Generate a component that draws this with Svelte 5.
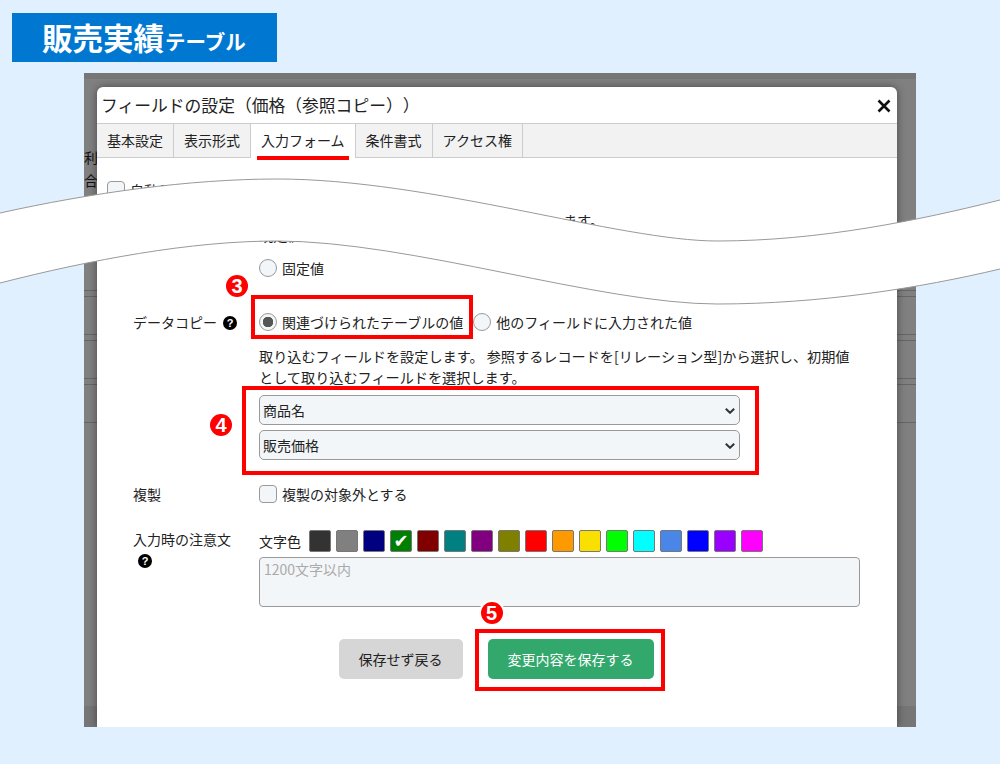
<script lang="ts">
  const tabs = ["基本設定", "表示形式", "入力フォーム", "条件書式", "アクセス権"];
  const activeTab = "入力フォーム";
  const swatches = [
    "#333333", "#808080", "#000080", "#008000", "#800000", "#008080",
    "#800080", "#808000", "#ff0000", "#ff9900", "#f9e000", "#00ff00",
    "#00ffff", "#4a86e8", "#0000ff", "#9900ff", "#ff00ff"
  ];
  const selectedColor = "#008000";
</script>

<div class="page">
  <h1 class="heading">販売実績<small>テーブル</small></h1>

  <div class="stage">
    <div class="behind">
      <p>利用</p>
      <p>合計</p>
      <div class="behind-rows"></div>
    </div>

    <div class="modal">
      <header class="modal-head">
        <h2>フィールドの設定（価格（参照コピー））</h2>
        <svg class="close" width="14" height="14" viewBox="0 0 14 14">
          <path d="M1.5 1.5 L12.5 12.5 M12.5 1.5 L1.5 12.5" stroke="#111" stroke-width="2.6" fill="none" />
        </svg>
      </header>

      <nav class="tabs">
        {#each tabs as tab}
          <div class="tab" class:active={tab === activeTab}>{tab}</div>
        {/each}
      </nav>

      <div class="body">
        <label class="choice">
          <input class="check" type="checkbox" />
          自動入力する
        </label>

        <div class="form">
          <div class="row hidden-row">
            <div></div>
            <div>
              <p class="note first">ます。</p>
              <p class="note second">既定値の設定</p>
              <label class="choice">
                <input class="radio" type="radio" name="init" />
                固定値
              </label>
            </div>
          </div>

          <div class="row copy-row">
            <div class="label">データコピー <span class="help">?</span></div>
            <div>
              <div class="radios">
                <label class="choice marked-radio">
                  <input class="radio" type="radio" name="copy" checked />
                  関連づけられたテーブルの値
                  <span class="frame"></span>
                  <span class="badge">3</span>
                </label>
                <label class="choice">
                  <input class="radio" type="radio" name="copy" />
                  他のフィールドに入力された値
                </label>
              </div>
              <p class="note desc">取り込むフィールドを設定します。 参照するレコードを[リレーション型]から選択し、初期値として取り込むフィールドを選択します。</p>
              <div class="selects">
                <div class="select">
                  <select><option>商品名</option></select>
                  <svg width="10" height="6" viewBox="0 0 10 6">
                    <path d="M0.8 0.8 L5 4.8 L9.2 0.8" stroke="#333" stroke-width="2" fill="none" />
                  </svg>
                </div>
                <div class="select">
                  <select><option>販売価格</option></select>
                  <svg width="10" height="6" viewBox="0 0 10 6">
                    <path d="M0.8 0.8 L5 4.8 L9.2 0.8" stroke="#333" stroke-width="2" fill="none" />
                  </svg>
                </div>
                <span class="frame"></span>
                <span class="badge">4</span>
              </div>
            </div>
          </div>

          <div class="row dup-row">
            <div class="label">複製</div>
            <label class="choice">
              <input class="check" type="checkbox" />
              複製の対象外とする
            </label>
          </div>

          <div class="row hint-row">
            <div class="label">
              入力時の注意文
              <span class="help hint-help">?</span>
            </div>
            <div>
              <div class="colors">
                <span class="colors-label">文字色</span>
                {#each swatches as color}
                  <span class="swatch" style="background: {color}">
                    {#if color === selectedColor}✔{/if}
                  </span>
                {/each}
              </div>
              <textarea placeholder="1200文字以内"></textarea>
            </div>
          </div>
        </div>

        <div class="actions">
          <button class="btn cancel">保存せず戻る</button>
          <div class="save-wrap">
            <button class="btn save">変更内容を保存する</button>
            <span class="frame"></span>
            <span class="badge">5</span>
          </div>
        </div>
      </div>
    </div>
  </div>

  <svg class="tear" width="1000" height="764" viewBox="0 0 1000 764">
    <path
      d="M0 213 C90 193 190 179 277 179 C430 179 620 241 717 241 C820 241 920 220 1000 200 L1000 269 C920 288 820 304 717 304 C600 304 410 241 277 241 C190 241 90 260 0 283 Z"
      fill="#fff"
    />
    <path d="M0 213 C90 193 190 179 277 179 C430 179 620 241 717 241 C820 241 920 220 1000 200" stroke="#999" fill="none" />
    <path d="M0 283 C90 260 190 241 277 241 C410 241 600 304 717 304 C820 304 920 288 1000 269" stroke="#999" fill="none" />
  </svg>
</div>

<style>
  :global(body) {
    margin: 0;
    background: #e0f0fe;
  }

  .page {
    position: relative;
    width: 1000px;
    height: 764px;
    padding-top: 13px;
    box-sizing: border-box;
    overflow: hidden;
    background: #e0f0fe;
    font-family: "Noto Sans CJK JP", "Noto Sans", sans-serif;
    font-size: 14px;
    color: #222;
    text-spacing-trim: space-all;
  }

  .heading {
    display: flex;
    align-items: baseline;
    box-sizing: border-box;
    width: 265px;
    height: 49px;
    margin: 0 0 11px 12px;
    padding-left: 30px;
    background: #0078d2;
    color: #fff;
    font-size: 30.5px;
    font-weight: 700;
    line-height: 48px;
  }

  .heading small {
    margin-left: 1px;
    font-size: 20.5px;
  }

  .stage {
    position: relative;
    display: flex;
    box-sizing: border-box;
    width: 832px;
    height: 654px;
    margin-left: 84px;
    padding: 14px 19px 0 13px;
    overflow: hidden;
    background: #808080;
  }

  .behind {
    position: absolute;
    inset: 0;
    border-top: 6px solid #767676;
    border-bottom: 21px solid #767676;
    color: #111;
    line-height: 23px;
  }

  .behind p {
    margin: 0;
  }

  .behind p:first-child {
    margin-top: 67px;
  }

  .behind-rows {
    height: 133px;
    margin-top: 98px;
    background: repeating-linear-gradient(
      to bottom,
      #666 0,
      #666 1px,
      transparent 1px,
      transparent 6px,
      #666 6px,
      #666 7px,
      transparent 7px,
      transparent 44px
    );
  }

  .modal {
    position: relative;
    flex: 1;
    border-radius: 6px 6px 0 0;
    background: #fff;
    box-shadow: 0 0 8px rgba(0, 0, 0, 0.45);
  }

  .modal-head {
    display: flex;
    align-items: center;
    justify-content: space-between;
    height: 36px;
    padding: 0 6px 0 4px;
  }

  .modal-head h2 {
    margin: 0;
    font-size: 16.8px;
    font-weight: 400;
    line-height: 35px;
    white-space: nowrap;
  }

  .close {
    margin-top: 1px;
  }

  .tabs {
    display: flex;
    height: 33px;
    border-top: 1px solid #ccc;
    border-bottom: 1px solid #ccc;
    background: #f2f2f2;
  }

  .tab {
    position: relative;
    padding: 0 10px;
    border-right: 1px solid #ccc;
    line-height: 33px;
    white-space: nowrap;
  }

  .tab.active {
    height: 34px;
    background: #fff;
  }

  .tab.active::after {
    content: "";
    position: absolute;
    left: 6px;
    right: 6px;
    bottom: -2px;
    height: 4px;
    background: #f00;
  }

  .body {
    padding: 23px 37px 0 10px;
  }

  .form {
    margin-left: 26px;
  }

  .row {
    display: grid;
    grid-template-columns: 126px 1fr;
  }

  .label {
    line-height: 18px;
    white-space: nowrap;
  }

  .choice {
    position: relative;
    display: inline-flex;
    align-items: center;
    gap: 5px;
    height: 18px;
    white-space: nowrap;
  }

  .check,
  .radio {
    appearance: none;
    flex: none;
    box-sizing: border-box;
    width: 18px;
    height: 18px;
    margin: 0;
    border: 1px solid #999;
    background: #f3f6f8;
  }

  .check {
    border-radius: 4px;
  }

  .radio {
    border-radius: 50%;
  }

  .radio:checked {
    background: radial-gradient(circle, #555 0, #555 5px, #f3f6f8 5.5px);
  }

  .note {
    margin: 0;
    font-size: 14.15px;
    line-height: 21px;
  }

  .hidden-row {
    margin-top: 7px;
  }

  .note.first {
    width: 345px;
    text-align: right;
  }

  .note.second {
    margin-top: -6px;
    margin-bottom: 13px;
  }

  .copy-row {
    margin-top: 32px;
  }

  .radios {
    display: flex;
    gap: 10px;
  }

  .marked-radio {
    position: relative;
  }

  .desc {
    margin-top: 15px;
    width: 600px;
  }

  .selects {
    position: relative;
    display: flex;
    flex-direction: column;
    gap: 5px;
    width: 481px;
    margin-top: 7px;
  }

  .select {
    position: relative;
    height: 30px;
  }

  .select select {
    appearance: none;
    display: block;
    box-sizing: border-box;
    width: 100%;
    height: 30px;
    padding: 0 24px 0 3px;
    border: 1px solid #999;
    border-radius: 5px;
    background: #f3f6f8;
    color: #222;
    font: inherit;
  }

  .select svg {
    position: absolute;
    top: 13px;
    right: 5px;
  }

  .dup-row {
    margin-top: 25px;
  }

  .hint-row {
    margin-top: 27px;
  }

  .help {
    display: inline-block;
    width: 14px;
    height: 14px;
    margin-left: 3px;
    border-radius: 50%;
    background: #000;
    color: #fff;
    font-family: "Liberation Sans", sans-serif;
    font-size: 11px;
    font-weight: 700;
    line-height: 14px;
    text-align: center;
    vertical-align: 1px;
  }

  .hint-help {
    display: block;
    margin: 6px 0 0 5px;
  }

  .colors {
    display: flex;
    align-items: center;
    gap: 5px;
    height: 22px;
  }

  .colors-label {
    width: 45px;
    white-space: nowrap;
  }

  .swatch {
    box-sizing: border-box;
    width: 22px;
    height: 22px;
    border: 1px solid #777;
    border-radius: 2px;
    color: #fff;
    font-family: "DejaVu Sans", sans-serif;
    font-size: 18px;
    line-height: 20px;
    text-align: center;
  }

  textarea {
    display: block;
    box-sizing: border-box;
    width: 601px;
    height: 50px;
    margin-top: 5px;
    padding: 1px 4px;
    border: 1px solid #999;
    border-radius: 4px;
    background: #f3f6f8;
    font: inherit;
    resize: none;
  }

  textarea::placeholder {
    color: #aaa;
  }

  .actions {
    display: flex;
    justify-content: center;
    gap: 25px;
    margin-top: 32px;
    padding-left: 25px;
  }

  .save-wrap {
    position: relative;
  }

  .btn {
    display: block;
    height: 40px;
    border: 0;
    border-radius: 5px;
    font: inherit;
  }

  .cancel {
    width: 124px;
    background: #d6d6d6;
    color: #222;
  }

  .save {
    width: 166px;
    background: #32a86c;
    color: #fff;
  }

  .frame {
    position: absolute;
    box-sizing: border-box;
    border: 4px solid #f00;
    pointer-events: none;
  }

  .badge {
    position: absolute;
    width: 22px;
    height: 22px;
    border-radius: 50%;
    background: #f00;
    box-shadow: 0 0 0 2px #fff;
    color: #fff;
    font-family: "Liberation Sans", sans-serif;
    font-size: 20px;
    font-weight: 700;
    line-height: 22px;
    text-align: center;
  }

  .marked-radio .frame {
    inset: -18px -10px -8px -8px;
  }

  .marked-radio .badge {
    top: -38px;
    left: -33px;
  }

  .selects .frame {
    inset: -9px -19px -15px -17px;
  }

  .selects .badge {
    top: 19px;
    left: -49px;
  }

  .save-wrap .frame {
    inset: -10px -11px -12px -13px;
  }

  .save-wrap .badge {
    top: -37px;
    left: -7px;
  }

  .tear {
    position: absolute;
    top: 0;
    left: 0;
    pointer-events: none;
  }
</style>
